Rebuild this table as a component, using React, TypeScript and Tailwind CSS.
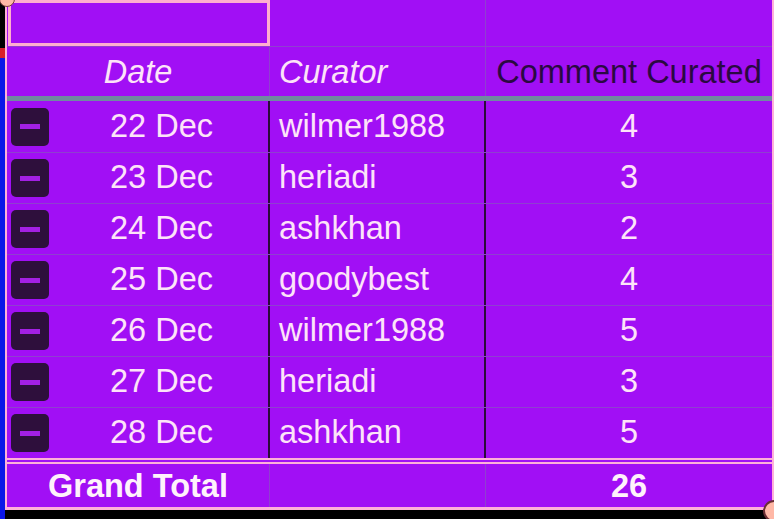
import React from "react";

const rows = [
  { date: "22 Dec", curator: "wilmer1988", count: 4 },
  { date: "23 Dec", curator: "heriadi", count: 3 },
  { date: "24 Dec", curator: "ashkhan", count: 2 },
  { date: "25 Dec", curator: "goodybest", count: 4 },
  { date: "26 Dec", curator: "wilmer1988", count: 5 },
  { date: "27 Dec", curator: "heriadi", count: 3 },
  { date: "28 Dec", curator: "ashkhan", count: 5 },
];

function MinusBox() {
  return (
    <div className="w-[38px] h-[38px] rounded-[5px] bg-[#2e0f3c] flex items-center justify-center shrink-0">
      <div className="w-[20px] h-[5px] bg-[#a320e4]" />
    </div>
  );
}

export default function App() {
  const total = rows.reduce((s, r) => s + r.count, 0);

  return (
    <div
      className="relative w-[774px] h-[519px] bg-black overflow-hidden flex"
      style={{ fontFamily: '"Liberation Sans", Arial, sans-serif' }}
    >
      {/* left strip of the sheet */}
      <div className="w-[5px] flex flex-col shrink-0">
        <div className="h-[48px] bg-black" />
        <div className="h-[10px] bg-[#d81e2a]" />
        <div className="flex-1 bg-[#0a16e8]" />
      </div>

      {/* table */}
      <div className="flex-1 h-[510px] flex flex-col bg-[#a10ff5] border-l-2 border-r-2 border-b-[3px] border-[#ffb0d8] text-[32.5px] leading-[1.15] text-[#fde3f8]">
        {/* row 1 */}
        <div className="flex shrink-0 h-[47px] border-b border-[#8f3fd0]">
          <div className="w-[263px] pl-[1px]">
            <div className="h-[46px] border-[3px] border-[#ffadcf]" />
          </div>
          <div className="w-[216px] border-r border-[#8f3fd0]" />
          <div className="flex-1" />
        </div>

        {/* header */}
        <div className="flex shrink-0 h-[49px] items-center">
          <div className="w-[263px] h-full flex items-center justify-center pt-[2px] italic border-r border-[#8f3fd0]">
            Date
          </div>
          <div className="w-[216px] h-full flex items-center pl-[9px] pt-[2px] italic border-r border-[#8f3fd0]">
            Curator
          </div>
          <div className="flex-1 h-full flex items-center justify-center pt-[2px] text-[#2a0942]">
            Comment Curated
          </div>
        </div>

        <div className="h-[5px] shrink-0 bg-[#6f8aa0]" />

        {/* data */}
        {rows.map((r, i) => (
          <div
            key={r.date}
            className={`flex shrink-0 h-[51px] ${i > 0 ? "border-t border-[#8f3fd0]" : ""}`}
          >
            <div className="w-[263px] flex items-center pl-[4px] border-r-2 border-[#2b0b3b]">
              <MinusBox />
              <div className="flex-1 text-center pl-[6px]">{r.date}</div>
            </div>
            <div className="w-[216px] flex items-center pl-[9px] border-r-2 border-[#2b0b3b]">
              {r.curator}
            </div>
            <div className="flex-1 flex items-center justify-center">{r.count}</div>
          </div>
        ))}

        {/* double rule */}
        <div className="h-[2px] shrink-0 bg-[#ffb0d8]" />
        <div className="h-[2px] shrink-0" />
        <div className="h-[2px] shrink-0 bg-[#ffb0d8]" />

        {/* grand total */}
        <div className="flex flex-1 min-h-0 font-bold text-[#fff2fb]">
          <div className="w-[263px] flex items-center justify-center pt-[2px] border-r border-[#8f3fd0]">
            Grand Total
          </div>
          <div className="w-[216px] border-r border-[#8f3fd0]" />
          <div className="flex-1 flex items-center justify-center pt-[2px]">{total}</div>
        </div>
      </div>

      {/* selection handles */}
      <div className="absolute left-[-1px] top-[-9px] w-[16px] h-[16px] rounded-full bg-[#ffb8a6] border border-[#7a3a3a]" />
      <div className="absolute left-[763px] top-[500px] w-[22px] h-[22px] rounded-full bg-[#ffb8a6] border-2 border-[#6a2e34]" />
    </div>
  );
}
